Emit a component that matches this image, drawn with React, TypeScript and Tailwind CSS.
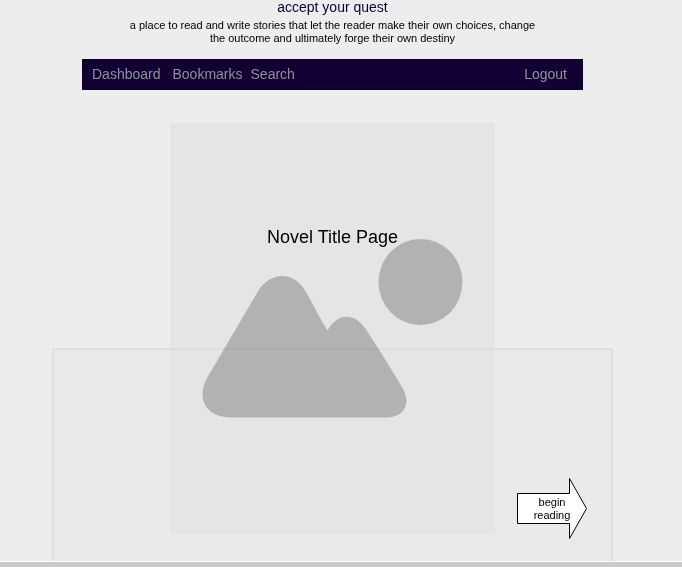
const links = [
  { label: "Dashboard", className: "mr-3" },
  { label: "Bookmarks", className: "mr-2" },
  { label: "Search", className: "" },
];

function CoverPlaceholder() {
  return (
    <svg viewBox="170 123 325 411" className="col-start-1 row-start-1 w-full" aria-hidden="true">
      <g fill="#b2b2b2">
        <ellipse cx="420.5" cy="282" rx="42" ry="43" />
        <path d="M207 378 L257 293 C269 271 294 270 306 292 C314 306 319 317 327.5 330.5 C337 313 354 312 365 328 C377 346 390 367 402 387 C412 404 404 417.5 386 417.5 H232 C206 417.5 196 399 207 378 Z" />
      </g>
    </svg>
  );
}

export default function App() {
  return (
    <div className="flex min-h-screen flex-col bg-[#ededed] font-['Liberation_Sans',Arial,sans-serif] text-black">
      <header className="flex flex-col items-center pr-[17px]">
        <h1 className="text-sm leading-[14px] text-[#110033]">accept your quest</h1>
        <p className="mt-[5px] max-w-[420px] text-center text-[11px] leading-[13px]">
          a place to read and write stories that let the reader make their own choices, change
          <br />
          the outcome and ultimately forge their own destiny
        </p>
        <nav className="mt-[14px] flex w-full max-w-[501px] items-center bg-[#110033] pr-4 pl-[10px] text-sm leading-[31px] text-[#938f9c]">
          {links.map((link) => (
            <a key={link.label} href="#" className={link.className}>
              {link.label}
            </a>
          ))}
          <a href="#" className="ml-auto">
            Logout
          </a>
        </nav>
      </header>

      <main className="relative flex flex-1 flex-col items-center pt-[33px] pr-[17px] pb-[27px]">
        <section className="grid w-full max-w-[325px] bg-[#e5e5e5]">
          <CoverPlaceholder />
          <h2 className="relative col-start-1 row-start-1 pt-[100px] text-center text-lg leading-7">
            Novel Title Page
          </h2>
        </section>

        <div className="absolute inset-x-0 bottom-0 flex h-[213px] justify-center pr-[17px] mix-blend-darken">
          <div className="w-full max-w-[561px] bg-[#eaeaea]" />
        </div>
        <div className="absolute inset-x-0 bottom-0 flex h-[213px] justify-center pr-[17px]">
          <div className="flex w-full max-w-[561px] items-end justify-end border-2 border-b-0 border-black/4 pr-6 pb-[21px]">
            <button type="button" className="grid w-[71px] items-center text-[11px] leading-[13px]">
              <svg viewBox="0 0 71 63" className="col-start-1 row-start-1 w-full" aria-hidden="true">
                <path d="M1.5 16.5 H53.5 V1.5 L70.5 31.5 L53.5 61.5 V46.5 H1.5 Z" fill="white" stroke="black" />
              </svg>
              <span className="relative col-start-1 row-start-1 pl-px text-center">
                begin
                <br />
                reading
              </span>
            </button>
          </div>
        </div>
      </main>

      <footer className="h-[6px] border-t border-white bg-[#cbcbcb]" />
    </div>
  );
}
